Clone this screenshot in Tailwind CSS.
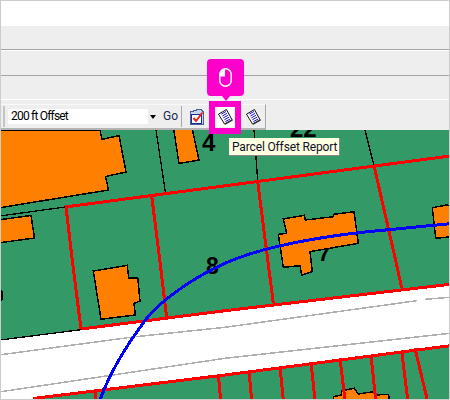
<!DOCTYPE html>
<html lang="en">
<head>
  <meta charset="UTF-8" />
  <title>Parcel Offset Report</title>
  <script src="https://cdn.jsdelivr.net/npm/@tailwindcss/browser@4"></script>
</head>
<body class="bg-white">
  <div class="relative w-[450px] h-[400px] overflow-hidden flex flex-col border border-[#cccccc] bg-white font-['Roboto',sans-serif]">

    <!-- Header bands -->
    <div class="h-[25px] shrink-0 bg-white"></div>
    <div class="h-[24px] shrink-0 bg-[#eeeeee] border-b border-[#a3a3a3]"></div>
    <div class="h-[26px] shrink-0 bg-[#eeeeee] border-t border-white border-b-[1px] border-b-[#a3a3a3]"></div>
    <div class="h-[23px] shrink-0 bg-[#eeeeee]"></div>

    <!-- Toolbar -->
    <div class="h-[31px] shrink-0 bg-[#eeeeee] border-t border-white pt-[4px]">
      <div class="w-[265px] h-[26px] flex items-center border-t border-t-[#f8f8f8] border-b-2 border-b-[#b4b4b4] border-r border-r-[#a8a8a8]">
        <div class="ml-[2px] w-[2px] h-[21px] bg-[#c4c4c4]"></div>
        <div class="ml-[3px] w-[149px] h-[15px] flex items-center justify-between bg-white">
          <span class="pl-[3px] pb-[1px] text-[12px] leading-none tracking-[-0.8px] text-black">200 ft Offset</span>
          <span class="w-[9px] h-[15px] flex items-center justify-center bg-[#eeeeee]">
            <span class="w-0 h-0 border-x-[3.5px] border-x-transparent border-t-[4px] border-t-black"></span>
          </span>
        </div>
        <span class="ml-[6px] w-[15px] pb-[1px] text-[12px] leading-none text-[#1a2a4e]">Go</span>
        <div class="ml-[3px] w-[1px] h-[21px] bg-[#a8a8a8]"></div>

        <!-- Check icon -->
        <svg class="ml-[8px]" width="14" height="16" viewBox="0 0 14 16" shape-rendering="crispEdges">
          <path d="M0.5 3 L8 0.5 L11 0.5 L13.5 3 L13.5 15.5 L0.5 15.5 Z" fill="#c8d4ea" stroke="#4a5f9a" />
          <rect x="1.5" y="5.5" width="10" height="9" fill="#ffffff" stroke="#16308f" stroke-width="1.5" />
          <path d="M3.5 9 L6 12 L12.5 3.5" fill="none" stroke="#ee1c1c" stroke-width="2" shape-rendering="auto" />
        </svg>

        <!-- Report icon, highlighted -->
        <div class="ml-[11px] w-[20px] h-[20px] pl-[3px] flex items-center bg-white">
          <svg width="15" height="16" viewBox="0 0 16 17">
            <path d="M0.5 5.5 L9 0.5 L15 11.5 L7 16 Z" fill="#ffffff" stroke="#000000" />
            <path d="M7.5 16 L15.5 11.5" stroke="#333333" stroke-width="1.5" />
            <path d="M3.5 5.4 L8.6 2.6 M4.6 7.4 L9.7 4.6 M5.7 9.4 L10.8 6.6 M6.8 11.4 L11.9 8.6 M7.9 13.4 L13 10.6" stroke="#0000cc" stroke-width="1" />
          </svg>
        </div>

        <!-- Report icon -->
        <svg class="ml-[11px]" width="15" height="16" viewBox="0 0 16 17">
          <path d="M0.5 5.5 L9 0.5 L15 11.5 L7 16 Z" fill="#ffffff" stroke="#000000" />
          <path d="M7.5 16 L15.5 11.5" stroke="#333333" stroke-width="1.5" />
          <path d="M3.5 5.4 L8.6 2.6 M4.6 7.4 L9.7 4.6 M5.7 9.4 L10.8 6.6 M6.8 11.4 L11.9 8.6 M7.9 13.4 L13 10.6" stroke="#0000cc" stroke-width="1" />
        </svg>
      </div>
    </div>

    <!-- Map -->
    <div class="flex-1 min-h-0 bg-[#339966]">
      <svg class="block" width="448" height="269" viewBox="1 130 448 269" shape-rendering="crispEdges" font-family="Liberation Sans, sans-serif" font-weight="700" font-size="24" fill="#000000">
        <!-- labels under the buildings -->
        <text x="290" y="137">22</text>
        <text x="202" y="151">4</text>
        <text x="318" y="261" font-size="22">7</text>
        <path d="M1 290 L3 291 L3.5 300 L1 301 Z" />

        <!-- road -->
        <polygon points="0,340 81,329 225,310.7 450,284.3 450,345.7 225,375 33,398.5 0,400" fill="#ffffff" />
        <g fill="none" stroke="#b0b0b0" stroke-width="1.5">
          <polyline points="1,354.7 133,337 225,327.3 416.7,300.7" />
          <polyline points="425,299.3 450,297.3" />
          <polyline points="1,391.7 225,358.3 450,333.3" />
        </g>

        <!-- buildings -->
        <g fill="#ff8000" stroke="#000000" stroke-width="1.5">
          <polygon points="-2,130 100,130 102,139.5 119,135.5 126,172 105.5,176.5 108.5,190 -2,208" />
          <polygon points="-2,220 31,215.5 34.5,238 -2,243" />
          <polygon points="173.5,128 192,128 199,160 179,163.5" />
          <polygon points="283.3,219 304.3,215.3 305.3,220 333.3,216.7 333.3,214.3 354,211.7 358.3,243.3 310,251.7 312.3,271.7 301.7,275 300,265.7 283.3,267.3 281,252 278.3,234.3 286.7,233.3" />
          <polygon points="432.3,207.7 446.7,205 452,207 452,236.7 435.7,238.3" />
          <polygon points="93.3,271 127.3,265.3 128.7,278.3 137.7,277.7 140,301 134,303.3 135.3,315 101,319.3" />
          <polygon points="333.3,402 333.3,396.7 341.7,395 341.7,390.7 354.3,388.3 358.3,394 373.3,391.7 375.7,395 388.3,394.3 390,402" />
        </g>

        <!-- thin parcel lines -->
        <g fill="none" stroke="#000000" stroke-width="1.3">
          <line x1="156" y1="130" x2="165.5" y2="193" />
          <line x1="0" y1="216" x2="65" y2="207" />
          <line x1="254" y1="130" x2="257.7" y2="181" />
          <line x1="365" y1="130" x2="374" y2="165.7" />
          <line x1="0" y1="340" x2="81" y2="329.7" />
        </g>

        <text x="206" y="274" font-size="23">8</text>

        <!-- red parcels -->
        <g fill="none" stroke="#ff0000" stroke-width="3">
          <line x1="65" y1="207" x2="450" y2="156" />
          <polyline points="66,207 72.5,262 81,329" />
          <polyline points="151.7,196 160,262 166.7,318" />
          <polyline points="257.7,181.7 268,262 273.3,303" />
          <polyline points="374,165.7 396,262 401.7,288" />
          <polyline points="81,329 225,310.7 450,284.3" />
          <polyline points="33,398.5 225,375 450,345.7" />
          <line x1="95" y1="390.7" x2="95" y2="400" />
          <line x1="218.3" y1="375" x2="220.7" y2="400" />
          <line x1="249" y1="371.7" x2="251.7" y2="400" />
          <line x1="280" y1="367.3" x2="283.3" y2="400" />
          <line x1="311" y1="362.3" x2="315" y2="400" />
          <line x1="340" y1="358.3" x2="345" y2="400" />
          <line x1="371" y1="355" x2="375.7" y2="400" />
          <line x1="401.7" y1="351" x2="407.7" y2="400" />
          <line x1="415" y1="348.3" x2="427.3" y2="400" />
        </g>

        <!-- blue route -->
        <path fill="none" stroke="#0000ff" stroke-width="3" d="M100 400 C110 372 125 347 146.7 318.3 C160 302 190 279 225 263.3 C250 252 290 241 358 232.7 L450 223.7" />
      </svg>
    </div>

    <!-- Highlight box -->
    <div class="absolute left-[208px] top-[100px] w-[32px] h-[33px] border-[6px] border-[#ff00cc]"></div>

    <!-- Callout with mouse icon -->
    <div class="absolute left-[206px] top-[58px] w-[37px] h-[37px] rounded-[4px] bg-[#ff00cc] flex items-center justify-center">
      <svg width="13" height="19" viewBox="0 0 13 19">
        <rect x="0.75" y="0.75" width="11.5" height="17.5" rx="5.75" fill="none" stroke="#ffffff" stroke-width="1.5" />
        <path d="M6 1 L6 8.5 L1 8.5 L1 6 A5 5 0 0 1 6 1 Z" fill="#ffffff" />
      </svg>
      <span class="absolute left-[14.5px] top-[37px] w-0 h-0 border-x-[4px] border-x-transparent border-t-[5px] border-t-[#ff00cc]"></span>
    </div>

    <!-- Tooltip -->
    <div class="absolute left-[228px] top-[137px] w-[111px] h-[18px] flex items-center bg-[#ffffe1] border-r border-b border-[#8a8a8a] pl-[3px] text-[12px] leading-none tracking-[-0.15px] text-[#10102a] whitespace-nowrap">Parcel Offset Report</div>
  </div>
</body>
</html>
